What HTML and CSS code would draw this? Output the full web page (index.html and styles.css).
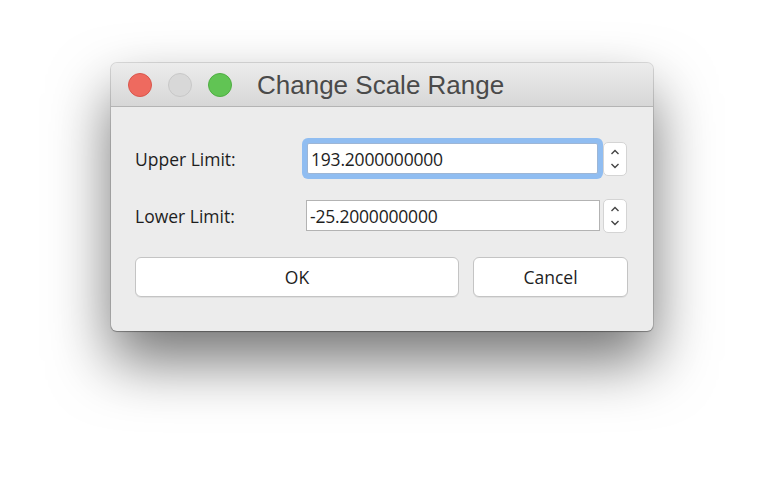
FILE: index.html
```html
<!DOCTYPE html>
<html>
<head>
<meta charset="utf-8">
<link rel="stylesheet" href="styles.css">
</head>
<body>
<div class="stage">
  <div class="window">
    <div class="titlebar">
      <div class="lights">
        <span class="light red"></span>
        <span class="light grey"></span>
        <span class="light green"></span>
      </div>
      <div class="title">Change Scale Range</div>
    </div>
    <div class="content">
      <div class="form">
        <div class="label">Upper Limit:</div>
        <div class="field focused">193.2000000000</div>
        <div class="spin">
          <svg width="10" height="6" viewBox="0 0 10 6"><path d="M1.5 5 L5 1.5 L8.5 5" fill="none" stroke="#444" stroke-width="1.4"/></svg>
          <svg width="10" height="6" viewBox="0 0 10 6"><path d="M1.5 1 L5 4.5 L8.5 1" fill="none" stroke="#444" stroke-width="1.4"/></svg>
        </div>
        <div class="label">Lower Limit:</div>
        <div class="field">-25.2000000000</div>
        <div class="spin">
          <svg width="10" height="6" viewBox="0 0 10 6"><path d="M1.5 5 L5 1.5 L8.5 5" fill="none" stroke="#444" stroke-width="1.4"/></svg>
          <svg width="10" height="6" viewBox="0 0 10 6"><path d="M1.5 1 L5 4.5 L8.5 1" fill="none" stroke="#444" stroke-width="1.4"/></svg>
        </div>
      </div>
      <div class="buttons">
        <div class="btn ok">OK</div>
        <div class="btn cancel">Cancel</div>
      </div>
    </div>
  </div>
</div>
</body>
</html>
```
FILE: styles.css
```css
html, body {
  margin: 0;
  padding: 0;
  background: #ffffff;
  width: 764px;
  height: 490px;
  overflow: hidden;
}
.stage {
  padding: 63px 0 0 111px;
}
.window {
  width: 542px;
  height: 268px;
  border-radius: 6px;
  background: #ececec;
  box-shadow: 0 0 0 1px rgba(0,0,0,0.12), 0 1px 1px rgba(0,0,0,0.25), 0 30px 60px rgba(0,0,0,0.55);
  overflow: hidden;
  display: flex;
  flex-direction: column;
}
.titlebar {
  height: 43px;
  border-bottom: 1px solid #b4b4b4;
  background: linear-gradient(#ececec, #d7d7d7);
  display: flex;
  align-items: center;
  padding-left: 17px;
  box-sizing: content-box;
}
.lights {
  display: flex;
  gap: 16px;
}
.light {
  width: 24px;
  height: 24px;
  border-radius: 50%;
  box-sizing: border-box;
}
.red { background: #ee6a5f; border: 1px solid #d9564c; }
.grey { background: #d8d8d8; border: 1px solid #c8c8c8; }
.green { background: #61c454; border: 1px solid #4fae42; }
.title {
  margin-left: 25px;
  font-family: "Liberation Sans", Arial, sans-serif;
  font-size: 26px;
  color: #4a4a4a;
  margin-top: 2px;
}
.content {
  padding: 36px 24px 0 24px;
  font-family: "Open Sans", sans-serif;
  font-size: 17.5px;
  color: #1e1e1e;
}
.form {
  display: grid;
  grid-template-columns: 171px 294px 27px;
  row-gap: 26px;
  grid-auto-rows: 31px;
  align-items: center;
}
.field {
  height: 31px;
  box-sizing: border-box;
  background: #fff;
  border: 1px solid #b3b3b3;
  padding: 0 3px;
  display: flex;
  align-items: center;
  letter-spacing: -0.2px;
}
.field.focused {
  border-color: #9db6d6;
  box-shadow: 0 0 0 5px #90bdf1;
  border-radius: 2px;
  margin-left: 1px;
  margin-right: 2px;
}
.spin {
  margin-left: 3px;
  height: 34px;
  box-sizing: border-box;
  background: #fff;
  border: 1px solid #d4d4d4;
  border-radius: 5px;
  display: flex;
  flex-direction: column;
  align-items: center;
  justify-content: center;
  gap: 8px;
}
.spin svg { display: block; }
.buttons {
  display: flex;
  gap: 14px;
  margin-top: 26px;
}
.btn {
  height: 40px;
  box-sizing: border-box;
  background: #fff;
  border: 1px solid #c4c4c4;
  border-radius: 6px;
  display: flex;
  align-items: center;
  justify-content: center;
  box-shadow: 0 1px 0 rgba(0,0,0,0.06);
}
.ok { width: 324px; }
.cancel { width: 155px; }
```
